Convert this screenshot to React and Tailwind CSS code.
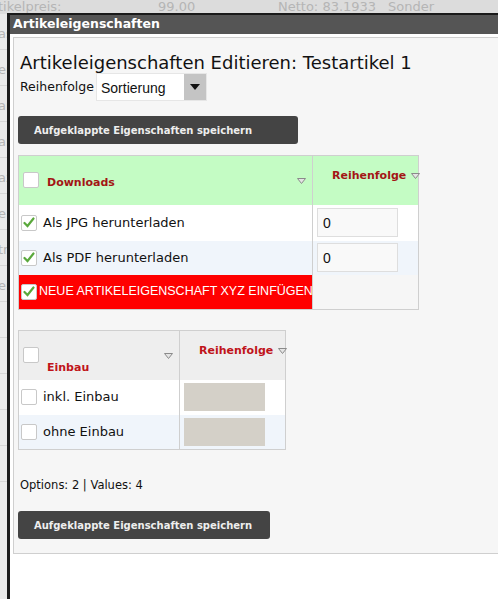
import React from "react";

const font = { fontFamily: '"DejaVu Sans", Verdana, sans-serif' };
const arial = { fontFamily: '"Liberation Sans", Arial, sans-serif' };

function Check({ checked }) {
  return (
    <span className="inline-flex h-[16px] w-[16px] shrink-0 items-center justify-center rounded-[2px] border border-[#c8c8c8] bg-white">
      {checked && (
        <svg width="12" height="11" viewBox="0 0 12 11">
          <path d="M1.5 6 L4.5 9 L10.5 1.5" fill="none" stroke="#5aa83c" strokeWidth="2.2" strokeLinecap="round" />
        </svg>
      )}
    </span>
  );
}

function SortTri() {
  return (
    <svg width="9" height="6" viewBox="0 0 9 6" className="shrink-0">
      <path d="M0.5 0.5 H8.5 L4.5 5.5 Z" fill="#e4e4e4" stroke="#8a8a8a" strokeWidth="1" />
    </svg>
  );
}

function SaveButton({ w }) {
  return (
    <button className={`flex h-[28px] ${w} items-center rounded-[3px] bg-[#444] pl-[16px] text-[10px] font-bold text-[#eee]`}>
      Aufgeklappte Eigenschaften speichern
    </button>
  );
}

function Background() {
  return (
    <div className="absolute inset-0 bg-[#e9e9e9] text-[#b5b5b5]" style={font}>
      <div className="flex h-[14px] items-end bg-[#dcdcdc] text-[13px] leading-[14px]">
        <span className="w-[160px] -ml-[2px]">tikelpreis:</span>
        <span className="w-[120px]">99.00</span>
        <span className="w-[110px]">Netto: 83.1933</span>
        <span>Sonder</span>
      </div>
      <div className="flex flex-col text-[13px]">
        {["as", "eu", "ar", "ar", "ax", "e", "tr", "en", "", "", "", "", ""].map((t, i) => (
          <div key={i} className="h-[36px] border-b border-[#d5d5d5] pt-[10px] -ml-[2px]">
            {t}
          </div>
        ))}
      </div>
    </div>
  );
}

export default function App() {
  return (
    <div className="relative h-[599px] w-[498px] overflow-hidden" style={font}>
      <Background />
      <div className="absolute left-[7px] top-[13px] bottom-0 right-0 flex flex-col border-l-[3px] border-t-[2px] border-[#1a1a1a] bg-white">
        <div className="flex h-[19px] items-center bg-[#555] pl-[3px] text-[12.5px] font-bold text-white">
          Artikeleigenschaften
        </div>
        <div className="pl-[3px] pt-[3px]">
          <div className="flex h-[517px] flex-col border border-r-0 border-[#cfcfcf] bg-[#f6f6f6] pl-[4px]">
            <h1 className="mt-[15px] pl-[2px] text-[18px] leading-[20px] text-[#111]">Artikeleigenschaften Editieren: Testartikel 1</h1>
            <div className="flex items-center pl-[2px]">
              <span className="text-[12.5px] text-[#111]">Reihenfolge</span>
              <div className="ml-[2px] flex h-[28px] w-[111px] border border-[#e6e6e6] bg-white">
                <span className="flex-1 pl-[4px] pt-[4px] text-[14px] text-[#111]" style={arial}>Sortierung</span>
                <span className="flex w-[22px] items-center justify-center bg-[#c4c4c4]">
                  <svg width="10" height="6" viewBox="0 0 10 6"><path d="M0 0 H10 L5 6 Z" fill="#111" /></svg>
                </span>
              </div>
            </div>

            <div className="mt-[15px]">
              <SaveButton w="w-[280px]" />
            </div>

            <table className="mt-[11px] w-[401px] table-fixed border-collapse border border-[#cfcfcf] text-[12.5px]">
              <colgroup>
                <col className="w-[294px]" />
                <col />
              </colgroup>
              <thead>
                <tr className="h-[49px] bg-[#c4fcc4]">
                  <th className="border-r border-[#cfcfcf] pl-[4px] text-left font-normal">
                    <div className="flex items-center">
                      <Check />
                      <span className="ml-[8px] mt-[5px] flex-1 text-[11px] font-bold text-[#a31515]">Downloads</span>
                      <span className="mr-[6px] mt-[2px]"><SortTri /></span>
                    </div>
                  </th>
                  <th className="font-normal">
                    <div className="flex items-start pl-[19px] -mt-[8px]">
                      <span className="text-[11px] font-bold text-[#a31515]">Reihenfolge</span>
                      <span className="ml-[5px] mt-[5px]"><SortTri /></span>
                    </div>
                  </th>
                </tr>
              </thead>
              <tbody className="text-[13px] text-[#111]">
                {[
                  ["Als JPG herunterladen", "bg-white", "h-[36px]"],
                  ["Als PDF herunterladen", "bg-[#f0f5fb]", "h-[34px]"],
                ].map(([t, bg, h]) => (
                  <tr key={t} className={`${h} ${bg}`}>
                    <td className="border-r border-[#cfcfcf] pl-[2px]">
                      <div className="flex items-center gap-[6px]">
                        <Check checked />
                        <span>{t}</span>
                      </div>
                    </td>
                    <td className="pl-[4px]">
                      <div className="h-[29px] w-[81px] border border-[#dedede] bg-[#f9f9f9] pl-[5px] pt-[4px] text-[14px]" style={arial}>0</div>
                    </td>
                  </tr>
                ))}
                <tr className="h-[35px]">
                  <td className="border-r border-[#cfcfcf] bg-[#ff0000] pl-[2px] text-white">
                    <div className="flex items-center gap-[2px] whitespace-nowrap">
                      <Check checked />
                      <span className="text-[12.5px]" style={arial}>NEUE ARTIKELEIGENSCHAFT XYZ EINFÜGEN</span>
                    </div>
                  </td>
                  <td className="bg-[#f6f6f6]"></td>
                </tr>
              </tbody>
            </table>

            <table className="mt-[20px] w-[268px] table-fixed border-collapse border border-[#cfcfcf] text-[12.5px]">
              <colgroup>
                <col className="w-[161px]" />
                <col />
              </colgroup>
              <thead>
                <tr className="h-[49px] bg-[#eeeeee]">
                  <th className="border-r border-[#cfcfcf] pl-[4px] text-left font-normal">
                    <div className="flex items-center">
                      <Check />
                      <span className="ml-[8px] mt-[26px] flex-1 text-[11px] font-bold text-[#c0141a]">Einbau</span>
                      <span className="mr-[6px] mt-[2px]"><SortTri /></span>
                    </div>
                  </th>
                  <th className="font-normal">
                    <div className="flex items-start pl-[19px] -mt-[8px]">
                      <span className="text-[11px] font-bold text-[#c0141a]">Reihenfolge</span>
                      <span className="ml-[5px] mt-[5px]"><SortTri /></span>
                    </div>
                  </th>
                </tr>
              </thead>
              <tbody className="text-[13px] text-[#111]">
                {[
                  ["inkl. Einbau", "bg-white"],
                  ["ohne Einbau", "bg-[#f0f5fb]"],
                ].map(([t, bg]) => (
                  <tr key={t} className={`h-[35px] ${bg}`}>
                    <td className="border-r border-[#cfcfcf] pl-[2px]">
                      <div className="flex items-center gap-[6px]">
                        <Check />
                        <span>{t}</span>
                      </div>
                    </td>
                    <td className="pl-[4px]">
                      <div className="h-[28px] w-[81px] bg-[#d4d0c8]"></div>
                    </td>
                  </tr>
                ))}
              </tbody>
            </table>

            <div className="mt-[27px] pl-[2px] text-[11.5px] text-[#111]">Options: 2 | Values: 4</div>

            <div className="mt-[17px]">
              <SaveButton w="w-[252px]" />
            </div>
          </div>
        </div>
      </div>
    </div>
  );
}
